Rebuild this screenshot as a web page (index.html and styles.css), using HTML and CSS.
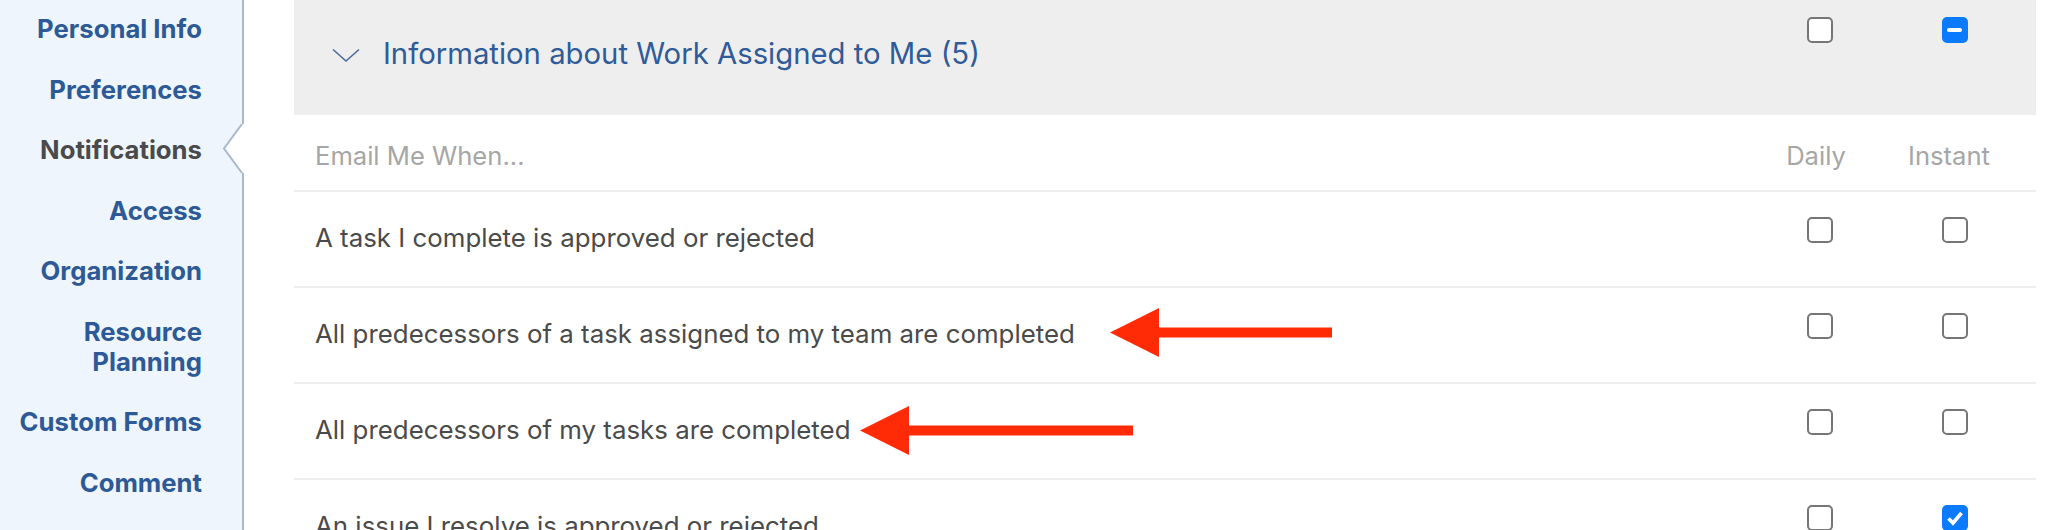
FILE: index.html
```html
<!DOCTYPE html>
<html lang="en">
<head>
<meta charset="utf-8">
<title>Notifications</title>
<link rel="stylesheet" href="styles.css">
</head>
<body>
<div class="page">
  <aside class="sidebar">
    <nav class="nav">
      <a class="nav-item">Personal Info</a>
      <a class="nav-item">Preferences</a>
      <a class="nav-item is-active">Notifications</a>
      <a class="nav-item">Access</a>
      <a class="nav-item">Organization</a>
      <a class="nav-item">Resource<br>Planning</a>
      <a class="nav-item">Custom Forms</a>
      <a class="nav-item">Comment</a>
    </nav>
    <svg class="notch" width="22" height="50" viewBox="0 0 22 50">
      <polygon points="20,0 2,24.5 20,49 22,49 22,0" fill="#ffffff"/>
      <polyline points="20,0 2,24.5 20,49" fill="none" stroke="#a8b9cd" stroke-width="2"/>
    </svg>
  </aside>

  <main class="main">
    <section class="group">
      <header class="group-head">
        <div class="group-title">
          <svg class="chevron" width="28" height="15" viewBox="0 0 28 15">
            <polyline points="1,1.5 14,13 27,1.5" fill="none" stroke="#4a6b99" stroke-width="1.6"/>
          </svg>
          <span>Information about Work Assigned to Me (5)</span>
        </div>
        <div class="cell"><span class="cb"></span></div>
        <div class="cell"><span class="cb cb-on"><span class="cb-bar"></span></span></div>
      </header>

      <div class="row row-head">
        <div class="label">Email Me When...</div>
        <div class="col-title">Daily</div>
        <div class="col-title col-title-instant">Instant</div>
      </div>

      <div class="row">
        <div class="text">A task I complete is approved or rejected</div>
        <div class="cell"><span class="cb"></span></div>
        <div class="cell"><span class="cb"></span></div>
      </div>

      <div class="row">
        <div class="text">All predecessors of a task assigned to my team are completed</div>
        <div class="cell"><span class="cb"></span></div>
        <div class="cell"><span class="cb"></span></div>
        <svg class="arrow arrow-team" width="222" height="49" viewBox="0 0 222 49">
          <polygon points="0,24.5 49,0 49,49" fill="#ff2a06"/>
          <rect x="48" y="19.5" width="174" height="10" fill="#ff2a06"/>
        </svg>
      </div>

      <div class="row">
        <div class="text">All predecessors of my tasks are completed</div>
        <div class="cell"><span class="cb"></span></div>
        <div class="cell"><span class="cb"></span></div>
        <svg class="arrow arrow-mine" width="273" height="49" viewBox="0 0 273 49">
          <polygon points="0,24.5 49,0 49,49" fill="#ff2a06"/>
          <rect x="48" y="19.5" width="225" height="10" fill="#ff2a06"/>
        </svg>
      </div>

      <div class="row">
        <div class="text">An issue I resolve is approved or rejected</div>
        <div class="cell"><span class="cb"></span></div>
        <div class="cell">
          <span class="cb cb-on">
            <svg width="22" height="22" viewBox="0 0 22 22"><polyline points="4.5,11.5 9,16 17.5,6" fill="none" stroke="#ffffff" stroke-width="3.6"/></svg>
          </span>
        </div>
      </div>
    </section>
  </main>
</div>
</body>
</html>
```
FILE: styles.css
```css
* { box-sizing: border-box; }

html, body {
  margin: 0;
  padding: 0;
  background: #ffffff;
}

body {
  font-family: "Inter", "Noto Sans", sans-serif;
  width: 2064px;
  height: 530px;
  overflow: hidden;
}

.page {
  display: flex;
  height: 530px;
}

/* ---------- sidebar ---------- */
.sidebar {
  position: relative;
  flex: 0 0 244px;
  height: 530px;
  background: #eef5fc;
  border-right: 2px solid #a8b9cd;
}

.nav {
  display: flex;
  flex-direction: column;
  align-items: flex-end;
  gap: 30.5px;
  padding: 14px 40px 0 0;
}

.nav-item {
  display: block;
  font-size: 25.7px;
  font-weight: 700;
  line-height: 30px;
  text-align: right;
  color: #2d5a97;
  text-decoration: none;
  white-space: nowrap;
}

.nav-item.is-active {
  color: #4a4a4a;
}

.notch {
  position: absolute;
  top: 124px;
  left: 222px;
  display: block;
}

/* ---------- main ---------- */
.main {
  flex: 1;
  padding: 0 28px 0 50px;
}

.group-head,
.row {
  display: grid;
  grid-template-columns: 1fr 135px 135px;
  align-items: start;
}

.group-head {
  height: 115px;
  padding: 17px 14px 0 0;
  background: #eeeeee;
}

.group-title {
  display: flex;
  align-items: center;
  margin-top: 16px;
  padding-left: 38px;
  font-size: 29.3px;
  line-height: 41px;
  color: #2e5b99;
  white-space: nowrap;
}

.chevron {
  display: block;
  margin: 4px 23px 0 0;
}

.row {
  position: relative;
  padding: 25px 14px 28px 21px;
  border-bottom: 2px solid #eeeeee;
}

.row-head {
  padding: 20px 14px 14px 21px;
}

.label,
.col-title {
  font-size: 25.6px;
  line-height: 41px;
  color: #a6a6a6;
  white-space: nowrap;
}

.col-title {
  text-align: center;
  padding-right: 7px;
}

.col-title-instant {
  padding-right: 11px;
}

.text {
  font-size: 25.85px;
  line-height: 41px;
  color: #4a4a4a;
  white-space: nowrap;
}

.cell {
  display: flex;
  justify-content: center;
}

/* ---------- checkboxes ---------- */
.cb {
  display: flex;
  align-items: center;
  justify-content: center;
  width: 26px;
  height: 26px;
  border: 2px solid #767676;
  border-radius: 5px;
  background: #ffffff;
}

.cb-on {
  border-color: #0a7bff;
  background: #0a7bff;
}

.cb-bar {
  display: block;
  width: 15px;
  height: 4px;
  border-radius: 2px;
  background: #ffffff;
}

.cb svg {
  display: block;
}

/* ---------- annotation arrows ---------- */
.arrow {
  position: absolute;
  display: block;
}

.arrow-team {
  left: 816px;
  top: 20px;
}

.arrow-mine {
  left: 566px;
  top: 22px;
}
```
